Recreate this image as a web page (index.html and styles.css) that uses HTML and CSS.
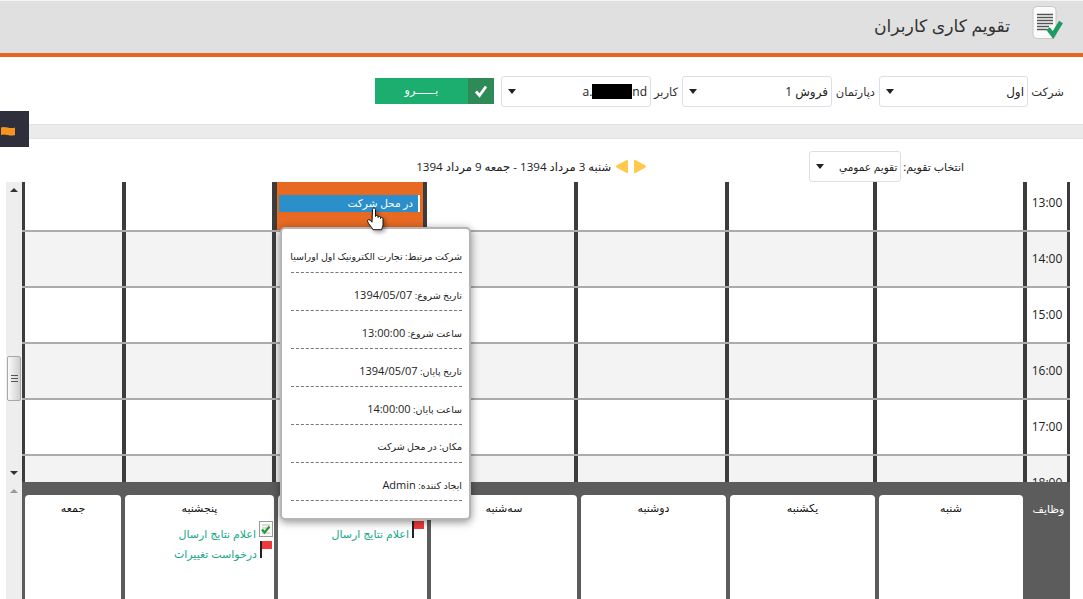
FILE: index.html
```html
<!DOCTYPE html>
<html lang="fa">
<head>
<meta charset="utf-8">
<title>تقویم کاری کاربران</title>
<link rel="stylesheet" href="styles.css">
</head>
<body>
<header class="page-head">
  <svg class="head-icon" width="32" height="34" viewBox="0 0 32 34">
    <rect x="2" y=".5" width="23" height="32" rx="4" fill="#fbfbfb" stroke="#c8c8c8"/>
    <path d="M6 8.500h16M6 11.500h16M6 14.500h16M6 17.500h16M6 20.500h12M6 23.500h10" stroke="#555" stroke-width="1.600"/>
    <path d="M17 22.500l5 6.500 8-13" fill="none" stroke="#1f9a63" stroke-width="4.500"/>
  </svg>
  <h1 class="page-title">تقویم کاری کاربران</h1>
</header>

<section class="filters">
  <span class="filter-label label-company">شرکت</span>
  <div class="select select-wide select-first"><span>اول</span><i class="caret"></i></div>
  <span class="filter-label label-dept">دپارتمان</span>
  <div class="select select-wide"><span>فروش 1</span><i class="caret"></i></div>
  <span class="filter-label label-user">کاربر</span>
  <div class="select select-wide"><span class="user-name" dir="ltr">a.<b class="redact"></b>nd</span><i class="caret"></i></div>
  <button class="go-btn">
    <span class="go-check"><svg width="14" height="14" viewBox="0 0 14 14"><path d="M2 7.500l3.500 4L12 2.500" fill="none" stroke="#fff" stroke-width="2.800"/></svg></span>
    <span class="go-text">بــــــرو</span>
  </button>
</section>

<div class="band"></div>

<aside class="side-tab">
  <svg width="14" height="10" viewBox="0 0 14 10"><path d="M0 1.500c4-2 9 2 14 0v7.500c-5 2-10-2-14 0z" fill="#f7941e"/></svg>
</aside>

<section class="cal-controls">
  <span class="cal-label">انتخاب تقویم:</span>
  <div class="select select-small"><span>تقویم عمومي</span><i class="caret"></i></div>
  <div class="week-nav">
    <svg width="34" height="15" viewBox="0 0 34 15">
      <path d="M22 2l10 5.500-10 5.500z" fill="#ffc94d" stroke="#ffc94d" stroke-width="2" stroke-linejoin="round"/>
      <path d="M14 2L4 7.500 14 13z" fill="#ffc94d" stroke="#ffc94d" stroke-width="2" stroke-linejoin="round"/>
    </svg>
    <span class="week-text">شنبه 3 مرداد 1394 - جمعه 9 مرداد 1394</span>
  </div>
</section>

<main class="calendar">
  <div class="scrollbar">
    <i class="sb-arrow sb-up sb-first"></i>
    <div class="sb-thumb"><em></em><em></em><em></em></div>
    <i class="sb-arrow sb-down"></i>
    <i class="sb-arrow sb-up sb-last"></i>
  </div>
  <div class="cal-body">
    <div class="hours">
      <div class="hours-inner">
        <div class="row">
          <div class="cell time">13:00</div><div class="cell"></div><div class="cell"></div><div class="cell"></div><div class="cell"></div>
          <div class="cell busy"><div class="event">در محل شرکت</div></div><div class="cell"></div><div class="cell"></div>
        </div>
        <div class="row alt">
          <div class="cell time">14:00</div><div class="cell"></div><div class="cell"></div><div class="cell"></div><div class="cell"></div><div class="cell"></div><div class="cell"></div><div class="cell"></div>
        </div>
        <div class="row">
          <div class="cell time">15:00</div><div class="cell"></div><div class="cell"></div><div class="cell"></div><div class="cell"></div><div class="cell"></div><div class="cell"></div><div class="cell"></div>
        </div>
        <div class="row alt">
          <div class="cell time">16:00</div><div class="cell"></div><div class="cell"></div><div class="cell"></div><div class="cell"></div><div class="cell"></div><div class="cell"></div><div class="cell"></div>
        </div>
        <div class="row">
          <div class="cell time">17:00</div><div class="cell"></div><div class="cell"></div><div class="cell"></div><div class="cell"></div><div class="cell"></div><div class="cell"></div><div class="cell"></div>
        </div>
        <div class="row alt">
          <div class="cell time">18:00</div><div class="cell"></div><div class="cell"></div><div class="cell"></div><div class="cell"></div><div class="cell"></div><div class="cell"></div><div class="cell"></div>
        </div>
      </div>
    </div>
    <div class="tasks">
      <div class="tasks-label">وظایف</div>
      <div class="task-card"><div class="task-day">شنبه</div></div>
      <div class="task-card"><div class="task-day">یکشنبه</div></div>
      <div class="task-card"><div class="task-day">دوشنبه</div></div>
      <div class="task-card"><div class="task-day">سه‌شنبه</div></div>
      <div class="task-card">
        <div class="task-day">چهارشنبه</div>
        <div class="task task-flush">
          <svg class="flag" width="13" height="17" viewBox="0 0 13 17"><rect width="2" height="17" fill="#222"/><rect x="2" width="10" height="8" fill="#f03a3a"/></svg>
          <span>اعلام نتایج ارسال</span>
        </div>
      </div>
      <div class="task-card">
        <div class="task-day">پنجشنبه</div>
        <div class="task">
          <svg class="flag" width="14" height="16" viewBox="0 0 14 16"><rect x=".5" y=".5" width="13" height="15" fill="#fafafa" stroke="#999"/><path d="M3 4h8M3 7h8M3 12h8" stroke="#bbb"/><path d="M3 8.500l2.500 3 5-6" fill="none" stroke="#1c9a2c" stroke-width="2.200"/></svg>
          <span>اعلام نتایج ارسال</span>
        </div>
        <div class="task">
          <svg class="flag" width="13" height="17" viewBox="0 0 13 17"><rect width="2" height="17" fill="#222"/><rect x="2" width="10" height="8" fill="#f03a3a"/></svg>
          <span>درخواست تغییرات</span>
        </div>
      </div>
      <div class="task-card"><div class="task-day">جمعه</div></div>
    </div>
  </div>
</main>

<div class="popover">
  <div class="pop-item">شرکت مرتبط: تجارت الکترونیک اول اوراسیا</div>
  <div class="pop-item">تاریخ شروع: <span class="num">1394/05/07</span></div>
  <div class="pop-item">ساعت شروع: <span class="num">13:00:00</span></div>
  <div class="pop-item">تاریخ پایان: <span class="num">1394/05/07</span></div>
  <div class="pop-item">ساعت پایان: <span class="num">14:00:00</span></div>
  <div class="pop-item">مکان: در محل شرکت</div>
  <div class="pop-item">ایجاد کننده: <span class="num">Admin</span></div>
</div>

<svg class="hand" width="20" height="26" viewBox="0 0 20 26">
  <path d="M5.500 2.500c0-2 3-2 3 0v7c0-1.500 2.500-1.500 2.500 0v1c0-1.500 2.500-1.500 2.500 0v1c0-1.300 2.500-1.300 2.500 .2v6c0 2-1 3-1.500 5h-8.500c-1-2.500-5-6-5.500-8.500-.3-1.500 1.500-2 2.500-1l2 2z" fill="#fff" stroke="#111" stroke-linejoin="round"/>
</svg>
</body>
</html>
```
FILE: styles.css
```css
* { box-sizing: border-box; }
html, body { margin: 0; padding: 0; }
body {
  width: 1083px;
  height: 599px;
  overflow: hidden;
  position: relative;
  direction: rtl;
  background: #fff;
  color: #222;
  font-family: "Open Sans", "DejaVu Sans", sans-serif;
  font-size: 11px;
}

.page-head {
  height: 57px;
  background: #e0e0e0;
  border-top: 1px solid #f4f4f4;
  border-bottom: 4px solid #e8651f;
  display: flex;
  align-items: center;
  padding-right: 20px;
  gap: 21px;
}
.head-icon { margin-top: -8px; }
.page-title { margin: 0 0 3px; font-size: 17.2px; font-weight: 400; color: #333; }

.filters {
  height: 67px;
  display: flex;
  align-items: center;
  padding: 1px 19px 0 0;
}
.filter-label { font-size: 11.5px; color: #333; white-space: nowrap; flex: none; }
.label-company { width: 36px; }
.label-dept { width: 43px; }
.label-user { width: 27px; }
.select {
  height: 31px;
  background: #fff;
  border: 1px solid #dcdfe4;
  border-radius: 3px;
  display: flex;
  align-items: center;
  justify-content: space-between;
  padding: 0 3px 0 6px;
  color: #222;
}
.select-wide { width: 150px; font-size: 12px; padding-right: 3px; margin-left: 4px; flex: none; }
.select-first { width: 149px; }
.select-small { width: 92px; font-size: 10.5px; padding-right: 3px; }
.caret {
  width: 0; height: 0;
  border-left: 4.500px solid transparent;
  border-right: 4.500px solid transparent;
  border-top: 5px solid #222;
}
.user-name { display: flex; align-items: center; font-size: 12px; }
.redact { display: block; width: 40px; height: 15px; background: #000; }

.go-btn {
  width: 119px;
  height: 26px;
  margin-right: 3px;
  border: 0;
  padding: 0;
  display: flex;
  background: #1cae6f;
  color: #fff;
  font: inherit;
}
.go-check {
  width: 26px;
  background: #2e8b57;
  display: flex;
  align-items: center;
  justify-content: center;
}
.go-text { flex: 1; text-align: center; line-height: 24px; font-size: 11px; }

.band {
  height: 15px;
  background: #ebebeb;
  border-top: 1px solid #e2e2e2;
  border-bottom: 1px solid #e2e2e2;
}

.side-tab {
  position: absolute;
  left: 0;
  top: 111px;
  width: 29px;
  height: 36px;
  background: #2f2f3b;
  direction: ltr;
  padding: 15px 0 0 1px;
}
.side-tab svg { display: block; }

.cal-controls {
  height: 43px;
  display: flex;
  align-items: center;
  padding: 12px 119px 0 0;
  gap: 2px;
}
.cal-label { font-size: 11px; }
.week-nav {
  display: flex;
  align-items: center;
  gap: 2px;
  margin-right: 160px;
}
.week-text { font-size: 11.6px; }

.calendar {
  height: 417px;
  direction: ltr;
  display: flex;
  padding-left: 6px;
  padding-right: 13px;
}
.scrollbar {
  width: 16px;
  flex: none;
  background: #eeeeee;
  position: relative;
}
.sb-arrow { position: absolute; left: 4px; width: 0; height: 0; border-left: 4px solid transparent; border-right: 4px solid transparent; }
.sb-up { border-bottom: 4px solid #333; }
.sb-down { border-top: 4px solid #333; }
.sb-first { top: 6px; }
.sb-down { top: 289px; }
.sb-last { top: 307px; border-bottom-color: #999; }
.sb-thumb {
  position: absolute;
  left: 1px;
  top: 174px;
  width: 14px;
  height: 45px;
  border: 1px solid #a8a8a8;
  border-radius: 2px;
  background: linear-gradient(90deg, #fafafa, #cfcfcf);
  display: flex;
  flex-direction: column;
  justify-content: center;
  align-items: center;
  gap: 2px;
}
.sb-thumb em { display: block; width: 7px; height: 1px; background: #555; }

.cal-body {
  width: 1048px;
  direction: rtl;
  display: flex;
  flex-direction: column;
}
.hours { height: 300px; overflow: hidden; background: #fff; }
.hours-inner { margin-top: -6px; }
.row {
  display: grid;
  grid-template-columns: 47px 150px 148px 151px 151px 151px 150px 100px;
  height: 56px;
  border-bottom: 2px solid #ababab;
}
.row.alt { background: #f3f3f3; }
.cell {
  border-left: 4px solid #3c3c3c;
  min-width: 0;
}
.cell:first-child { border-right: 3px solid #3c3c3c; }
.cell:last-child { border-left-width: 3px; }
.time {
  direction: ltr;
  text-align: center;
  font-size: 12px;
  line-height: 54px;
  color: #222;
}
.busy { background: #e86a22; padding: 19px 3px 0 2px; border-left-width: 5px; }
.event {
  height: 17px;
  background: #2a8fcb;
  border-right: 2px solid #fff;
  color: #fff;
  font-size: 10.5px;
  line-height: 16px;
  padding-right: 5px;
}

.tasks {
  height: 117px;
  background: #5c5c5c;
  padding: 13px 0 0 3px;
  display: grid;
  grid-template-columns: 43px 144px 145px 145px 146px 149px 149px 96px;
  column-gap: 4px;
}
.tasks-label { color: #fff; font-size: 11px; text-align: center; padding-top: 6px; }
.task-card { background: #fff; border-radius: 4px 4px 0 0; padding-top: 5px; }
.task-day { text-align: center; font-size: 11px; color: #111; height: 21px; }
.task {
  display: flex;
  align-items: flex-start;
  gap: 3px;
  height: 20px;
  padding-right: 1px;
  color: #18a889;
  font-size: 11px;
  line-height: 26px;
}
.task-flush { padding-right: 2px; }
.flag { flex: none; }

.popover {
  position: absolute;
  left: 280px;
  top: 227px;
  width: 191px;
  height: 293px;
  background: #fff;
  border: 2px solid #b5b5b5;
  border-radius: 5px;
  box-shadow: 0 2px 8px rgba(0,0,0,.45);
  padding: 6px 7px 0 9px;
}
.pop-item {
  height: 38px;
  border-bottom: 1px dashed #777;
  padding-top: 14px;
  font-size: 9.5px;
  line-height: 16px;
  color: #222;
  white-space: nowrap;
}
.num { font-size: 11px; }

.hand { position: absolute; left: 367px; top: 207px; filter: drop-shadow(2px 2px 2px rgba(0,0,0,.4)); }
```
